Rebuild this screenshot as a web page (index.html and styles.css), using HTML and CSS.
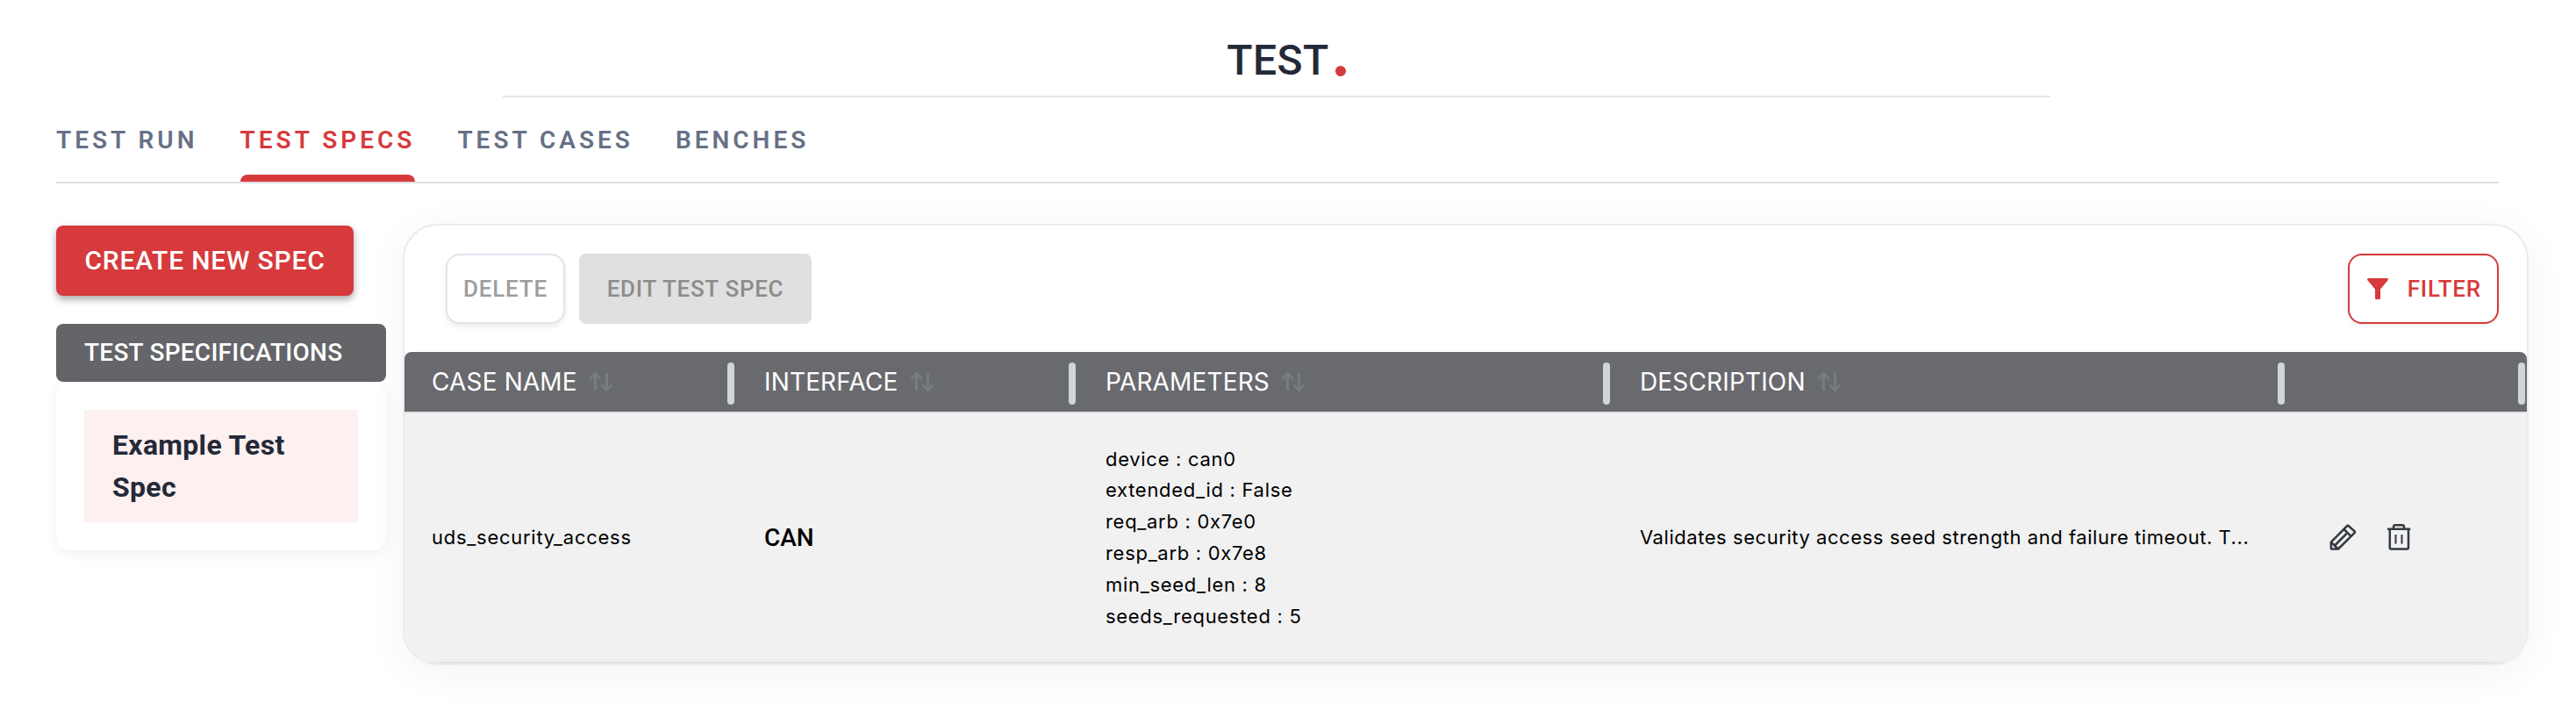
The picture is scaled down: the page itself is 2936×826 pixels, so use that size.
FILE: index.html
```html
<!DOCTYPE html>
<html lang="en">
<head>
<meta charset="utf-8">
<title>Test</title>
<link rel="stylesheet" href="styles.css">
</head>
<body>
<svg width="0" height="0" class="defs">
  <symbol id="sort" viewBox="0 0 28 22"><path d="M7.500 21V2M1.500 8L7.500 1.500L13.500 8M20.500 1V20.500M14.500 14.500L20.500 20.500L26.500 14.500"/></symbol>
</svg>
<header class="title">
  <h1>TEST<span class="dot"></span></h1>
</header>
<nav class="tabs">
  <a class="tab">TEST RUN</a>
  <a class="tab active">TEST SPECS</a>
  <a class="tab">TEST CASES</a>
  <a class="tab">BENCHES</a>
</nav>
<main class="main">
  <aside class="side">
    <button class="create">CREATE NEW SPEC</button>
    <div class="side-head">TEST SPECIFICATIONS</div>
    <div class="side-body"><div class="spec">Example Test Spec</div></div>
  </aside>
  <section class="card">
    <div class="toolbar">
      <button class="delete">DELETE</button>
      <button class="edit">EDIT TEST SPEC</button>
      <button class="filter">
        <svg width="24" height="24" viewBox="0 0 24 24"><path fill="currentColor" d="M1 0H23Q24.500 .8 23.600 2.200L15 12.500V23Q14.800 24 13.800 24H10.200Q9.200 24 9 23V12.500L.4 2.200Q-.5 .8 1 0Z"/></svg>
        <span>FILTER</span>
      </button>
    </div>
    <div class="row head">
      <div class="cell">CASE NAME<svg class="sort"><use href="#sort"/></svg></div>
      <div class="cell">INTERFACE<svg class="sort"><use href="#sort"/></svg></div>
      <div class="cell">PARAMETERS<svg class="sort"><use href="#sort"/></svg></div>
      <div class="cell">DESCRIPTION<svg class="sort"><use href="#sort"/></svg></div>
      <div class="cell"></div>
    </div>
    <div class="row body">
      <div class="cell">uds_security_access</div>
      <div class="cell can">CAN</div>
      <div class="cell params"><div>device : can0</div><div>extended_id : False</div><div>req_arb : 0x7e0</div><div>resp_arb : 0x7e8</div><div>min_seed_len : 8</div><div>seeds_requested : 5</div></div>
      <div class="cell description">Validates security access seed strength and failure timeout. T...</div>
      <div class="cell actions">
        <svg width="32" height="32" viewBox="0 0 32 32"><path d="M2.800 21.700L20.800 3.500Q22 2.300 23.200 3.500L29.500 9.200Q30.500 10.200 29.500 11.200L11 29.500H3.800Q2.800 29.500 2.800 28.500ZM17.500 7L25.500 14.800M2.800 21.700L11 29.500M7.500 25L20.500 12"/></svg>
        <svg width="32" height="32" viewBox="0 0 32 32"><path d="M3 6.800H29.300M5.800 6.800V28Q5.800 29.500 7.300 29.500H25.500Q27 29.500 27 28V6.800M10 6.500V4.500Q10 2.300 12.200 2.300H19.800Q22 2.300 22 4.500V6.500"/><path class="thin" d="M12.500 13V23.500M19.500 13V23.500"/></svg>
      </div>
    </div>
  </section>
</main>
</body>
</html>
```

FILE: styles.css
```css
* { box-sizing: border-box; }
body { margin: 0; height: 826px; background: #fff; font-family: Roboto, sans-serif; overflow: hidden; }
button { font: 500 28px Roboto, sans-serif; margin: 0; height: 80px; white-space: nowrap; flex: none; }
svg { fill: none; flex: none; }
.defs { position: absolute; }
.title { width: 1764px; height: 111px; margin-left: 573px; border-bottom: 2px solid #e6e6e6; padding-top: 41px; }
.title h1 { margin: 0; display: flex; justify-content: center; gap: 7px; height: 56px; font-size: 48px; line-height: 56px; font-weight: 500; letter-spacing: .4px; color: #242938; padding-left: 22px; }
.dot { width: 12px; height: 12px; border-radius: 50%; background: #d63a3c; margin-top: 34px; }
.tabs { display: flex; gap: 48px; margin: 0 88px 0 64px; height: 98px; border-bottom: 2px solid #dedfe5; }
.tab { height: 96px; line-height: 32px; padding-top: 33px; font-size: 28px; font-weight: 600; letter-spacing: 4px; color: #667085; white-space: nowrap; display: flex; flex-direction: column; justify-content: space-between; }
.active { color: #d63a3c; }
.active::after { content: ""; height: 8px; background: #d63a3c; border-radius: 8px 8px 0 0; }
.main { display: flex; padding: 46px 54px 0 64px; }
.side { width: 376px; margin-right: 19px; padding-top: 2px; }
.create { display: block; width: 339px; padding: 0 0 2px; border: 0; border-radius: 8px; background: #d63a3c; color: #fff; font-size: 30px; letter-spacing: .8px; box-shadow: 0 4px 8px rgba(0,0,0,.35); }
.side-head { margin-top: 32px; height: 66px; line-height: 65px; padding-left: 32px; border-radius: 8px; background: #646569; color: #fff; font-size: 28px; font-weight: 500; letter-spacing: .25px; white-space: nowrap; }
.side-body { height: 192px; padding: 32px; border-radius: 16px; background: #fff; box-shadow: 0 4px 16px rgba(0,0,0,.06); }
.spec { height: 128px; padding: 16px 32px; background: #fcf0f0; color: #242938; font-size: 32px; line-height: 48px; font-weight: 700; letter-spacing: .3px; }
.card { width: 2423px; height: 503px; border: 2px solid #ebebeb; border-radius: 40px; background: #fff; box-shadow: 0 8px 48px rgba(0,0,0,.05); overflow: hidden; }
.toolbar { display: flex; gap: 16px; height: 144px; padding: 32px 32px 0 47px; }
.delete { width: 136px; padding: 0; background: #fff; border: 2px solid #dfe5ec; border-radius: 16px; color: #9d9d9d; font-size: 26px; letter-spacing: .8px; box-shadow: 0 3px 6px rgba(0,0,0,.08); }
.edit { width: 265px; padding: 0; border: 0; border-radius: 8px; background: #e0e0e0; color: #8c8c8c; font-size: 26px; letter-spacing: .7px; }
.filter { margin-left: auto; width: 172px; padding: 0 18px 0 20px; display: flex; align-items: center; justify-content: space-between; border: 2px solid #d63a3c; border-radius: 16px; background: #fff; color: #d63a3c; font-size: 26px; letter-spacing: .8px; box-shadow: 0 2px 6px rgba(0,0,0,.06); }
.row { display: grid; grid-template-columns: 378px 389px 609px 769px 274px; }
.cell { display: flex; align-items: center; padding-left: 32px; white-space: nowrap; }
.cell:first-child { padding-left: 31px; }
.head { height: 70px; background: #696a6e; border-bottom: 2px solid #dfe3e8; border-radius: 8px 8px 0 0; color: #fff; font: 400 28px Inter, sans-serif; letter-spacing: .15px; }
.head .cell::after { content: ""; width: 8px; height: 48px; border-radius: 4px; background: #d0d5d9; margin: 4px 2px 0 auto; }
.sort { width: 28px; height: 22px; margin-left: 13px; stroke: #767d80; stroke-width: 3; }
.body { height: 285px; background: #f1f1f1; border-bottom: 2px solid #dfe3e8; color: #000; font: 400 22px Inter, sans-serif; letter-spacing: .73px; }
.body .cell { padding-bottom: 1px; }
.can { font: 500 28px Roboto, sans-serif; color: #000; letter-spacing: 0; }
.body .params { flex-direction: column; align-items: flex-start; justify-content: center; line-height: 35.8px; padding-top: 1px; padding-bottom: 0; letter-spacing: .7px; }
.body .description { letter-spacing: .55px; }
.body .actions { gap: 32px; padding-left: 48px; padding-bottom: 2px; }
.actions svg { stroke: #333a42; stroke-width: 2.5; stroke-linejoin: round; }
.actions .thin { stroke-width: 2; }
```
